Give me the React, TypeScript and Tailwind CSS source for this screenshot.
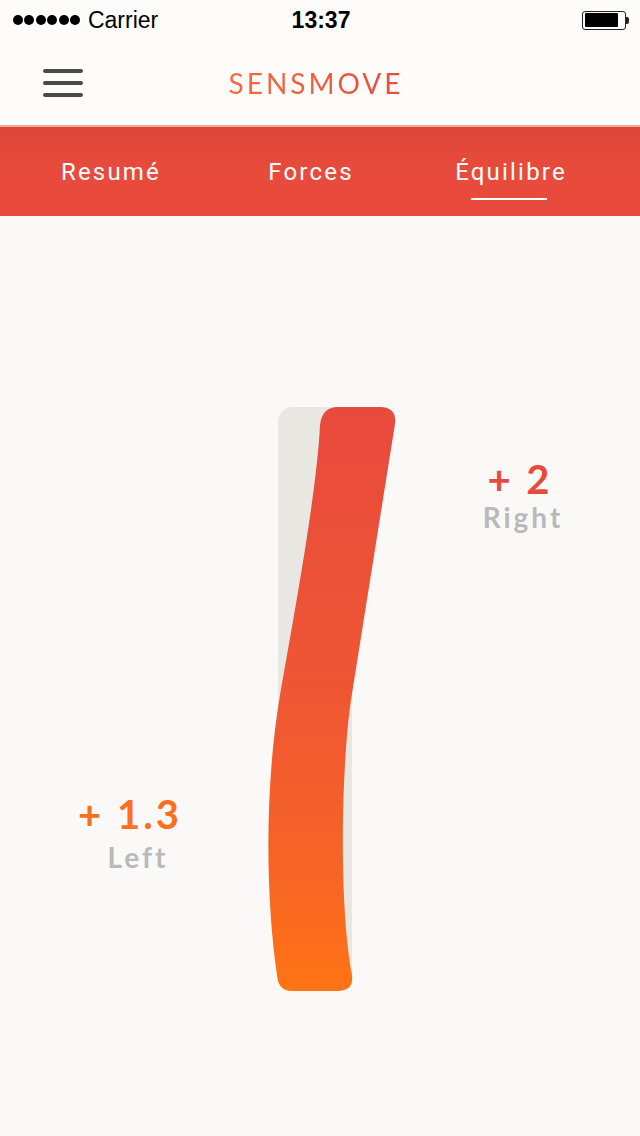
import React from "react";

const tabs = [
  { label: "Resumé", active: false },
  { label: "Forces", active: false },
  { label: "Équilibre", active: true },
];

function Battery() {
  return (
    <div className="flex items-center">
      <div className="w-[44px] h-[19px] rounded-[3px] border border-[#222] p-[1.5px] flex">
        <div className="w-[33px] h-full bg-black rounded-[1px]" />
      </div>
      <div className="w-[3px] h-[7px] bg-[#222] rounded-r-[2px]" />
    </div>
  );
}

function Balance() {
  return (
    <svg width="140" height="600" viewBox="0 0 140 600" className="shrink-0 mt-[184px]">
      <defs>
        <linearGradient id="bar" x1="0" y1="0" x2="0" y2="1">
          <stop offset="0" stopColor="#e84a3d" />
          <stop offset="0.5" stopColor="#ef5733" />
          <stop offset="0.8" stopColor="#f76525" />
          <stop offset="1" stopColor="#ff7414" />
        </linearGradient>
      </defs>
      <rect x="18" y="7" width="74" height="584" rx="15" fill="#e8e7e2" />
      <path
        d="M 60 25 Q 62 7 78 7 L 120 7 Q 137 7 135 24 L 91 300 C 82 360 78 500 92 575 Q 94 591 78 591 L 32 591 Q 18 591 17 575 C 6 500 4 390 20 295 C 35 210 57 90 60 25 Z"
        fill="url(#bar)"
      />
    </svg>
  );
}

export default function App() {
  return (
    <div className="w-[640px] h-[1136px] bg-[#faf9f7] overflow-hidden flex flex-col">
      {/* Status bar */}
      <div className="h-[40px] bg-[#fdfcfb] flex items-center pl-[13px] pr-[11px] font-['Liberation_Sans',Arial,sans-serif] text-black">
        <div className="flex-1 flex items-center">
          <div className="flex gap-[1.4px]">
            {[0, 1, 2, 3, 4, 5].map((i) => (
              <span key={i} className="block w-[10px] h-[10px] rounded-full bg-black" />
            ))}
          </div>
          <span className="ml-[8px] text-[23px] leading-none">Carrier</span>
        </div>
        <span className="text-[23px] leading-none font-bold">13:37</span>
        <div className="flex-1 flex justify-end">
          <Battery />
        </div>
      </div>

      {/* Nav bar */}
      <div className="h-[85px] bg-[#fdfcfb] grid grid-cols-[1fr_auto_1fr] items-center">
        <div className="pl-[43px] flex flex-col gap-[8px]">
          <span className="block w-[40px] h-[4px] rounded-full bg-[#4a4a4a]" />
          <span className="block w-[40px] h-[4px] rounded-full bg-[#4a4a4a]" />
          <span className="block w-[40px] h-[4px] rounded-full bg-[#4a4a4a]" />
        </div>
        <span className="mr-[8px] text-[28px] leading-none tracking-[3px] font-['Lato',sans-serif] bg-gradient-to-r from-[#f56a3a] to-[#e84b3c] bg-clip-text text-transparent">
          SENSMOVE
        </span>
        <div />
      </div>
      <div className="h-[2px] bg-[#f4a89d]" />

      {/* Tabs */}
      <div className="h-[89px] bg-gradient-to-b from-[#dd4638] via-[#e84b3c] to-[#e84b3c] flex pl-[11px] font-['Roboto',sans-serif]">
        {tabs.map((t) => (
          <div key={t.label} className="w-[200px] flex flex-col items-center pt-[31px]">
            <span className="text-white text-[24px] leading-[28px] tracking-[2.2px]">{t.label}</span>
            {t.active && <span className="block mt-[12px] w-[76px] h-[2px] bg-white -translate-x-[2px]" />}
          </div>
        ))}
      </div>

      {/* Main */}
      <div className="flex-1 flex font-['Lato',sans-serif] font-bold">
        <div className="w-[260px] flex flex-col items-center pt-[578px]">
          <span className="text-[40px] leading-[40px] tracking-[3px] text-[#ff6d1f]">+ 1.3</span>
          <span className="mt-[9px] ml-[16px] text-[28px] leading-[28px] tracking-[3px] text-[#b9b9b9]">Left</span>
        </div>
        <Balance />
        <div className="flex-1 flex flex-col items-center pt-[243px]">
          <span className="text-[40px] leading-[40px] tracking-[3px] text-[#e84b3c]">+ 2</span>
          <span className="mt-[4px] ml-[6px] text-[28px] leading-[28px] tracking-[3px] text-[#b9b9b9]">Right</span>
        </div>
      </div>
    </div>
  );
}
